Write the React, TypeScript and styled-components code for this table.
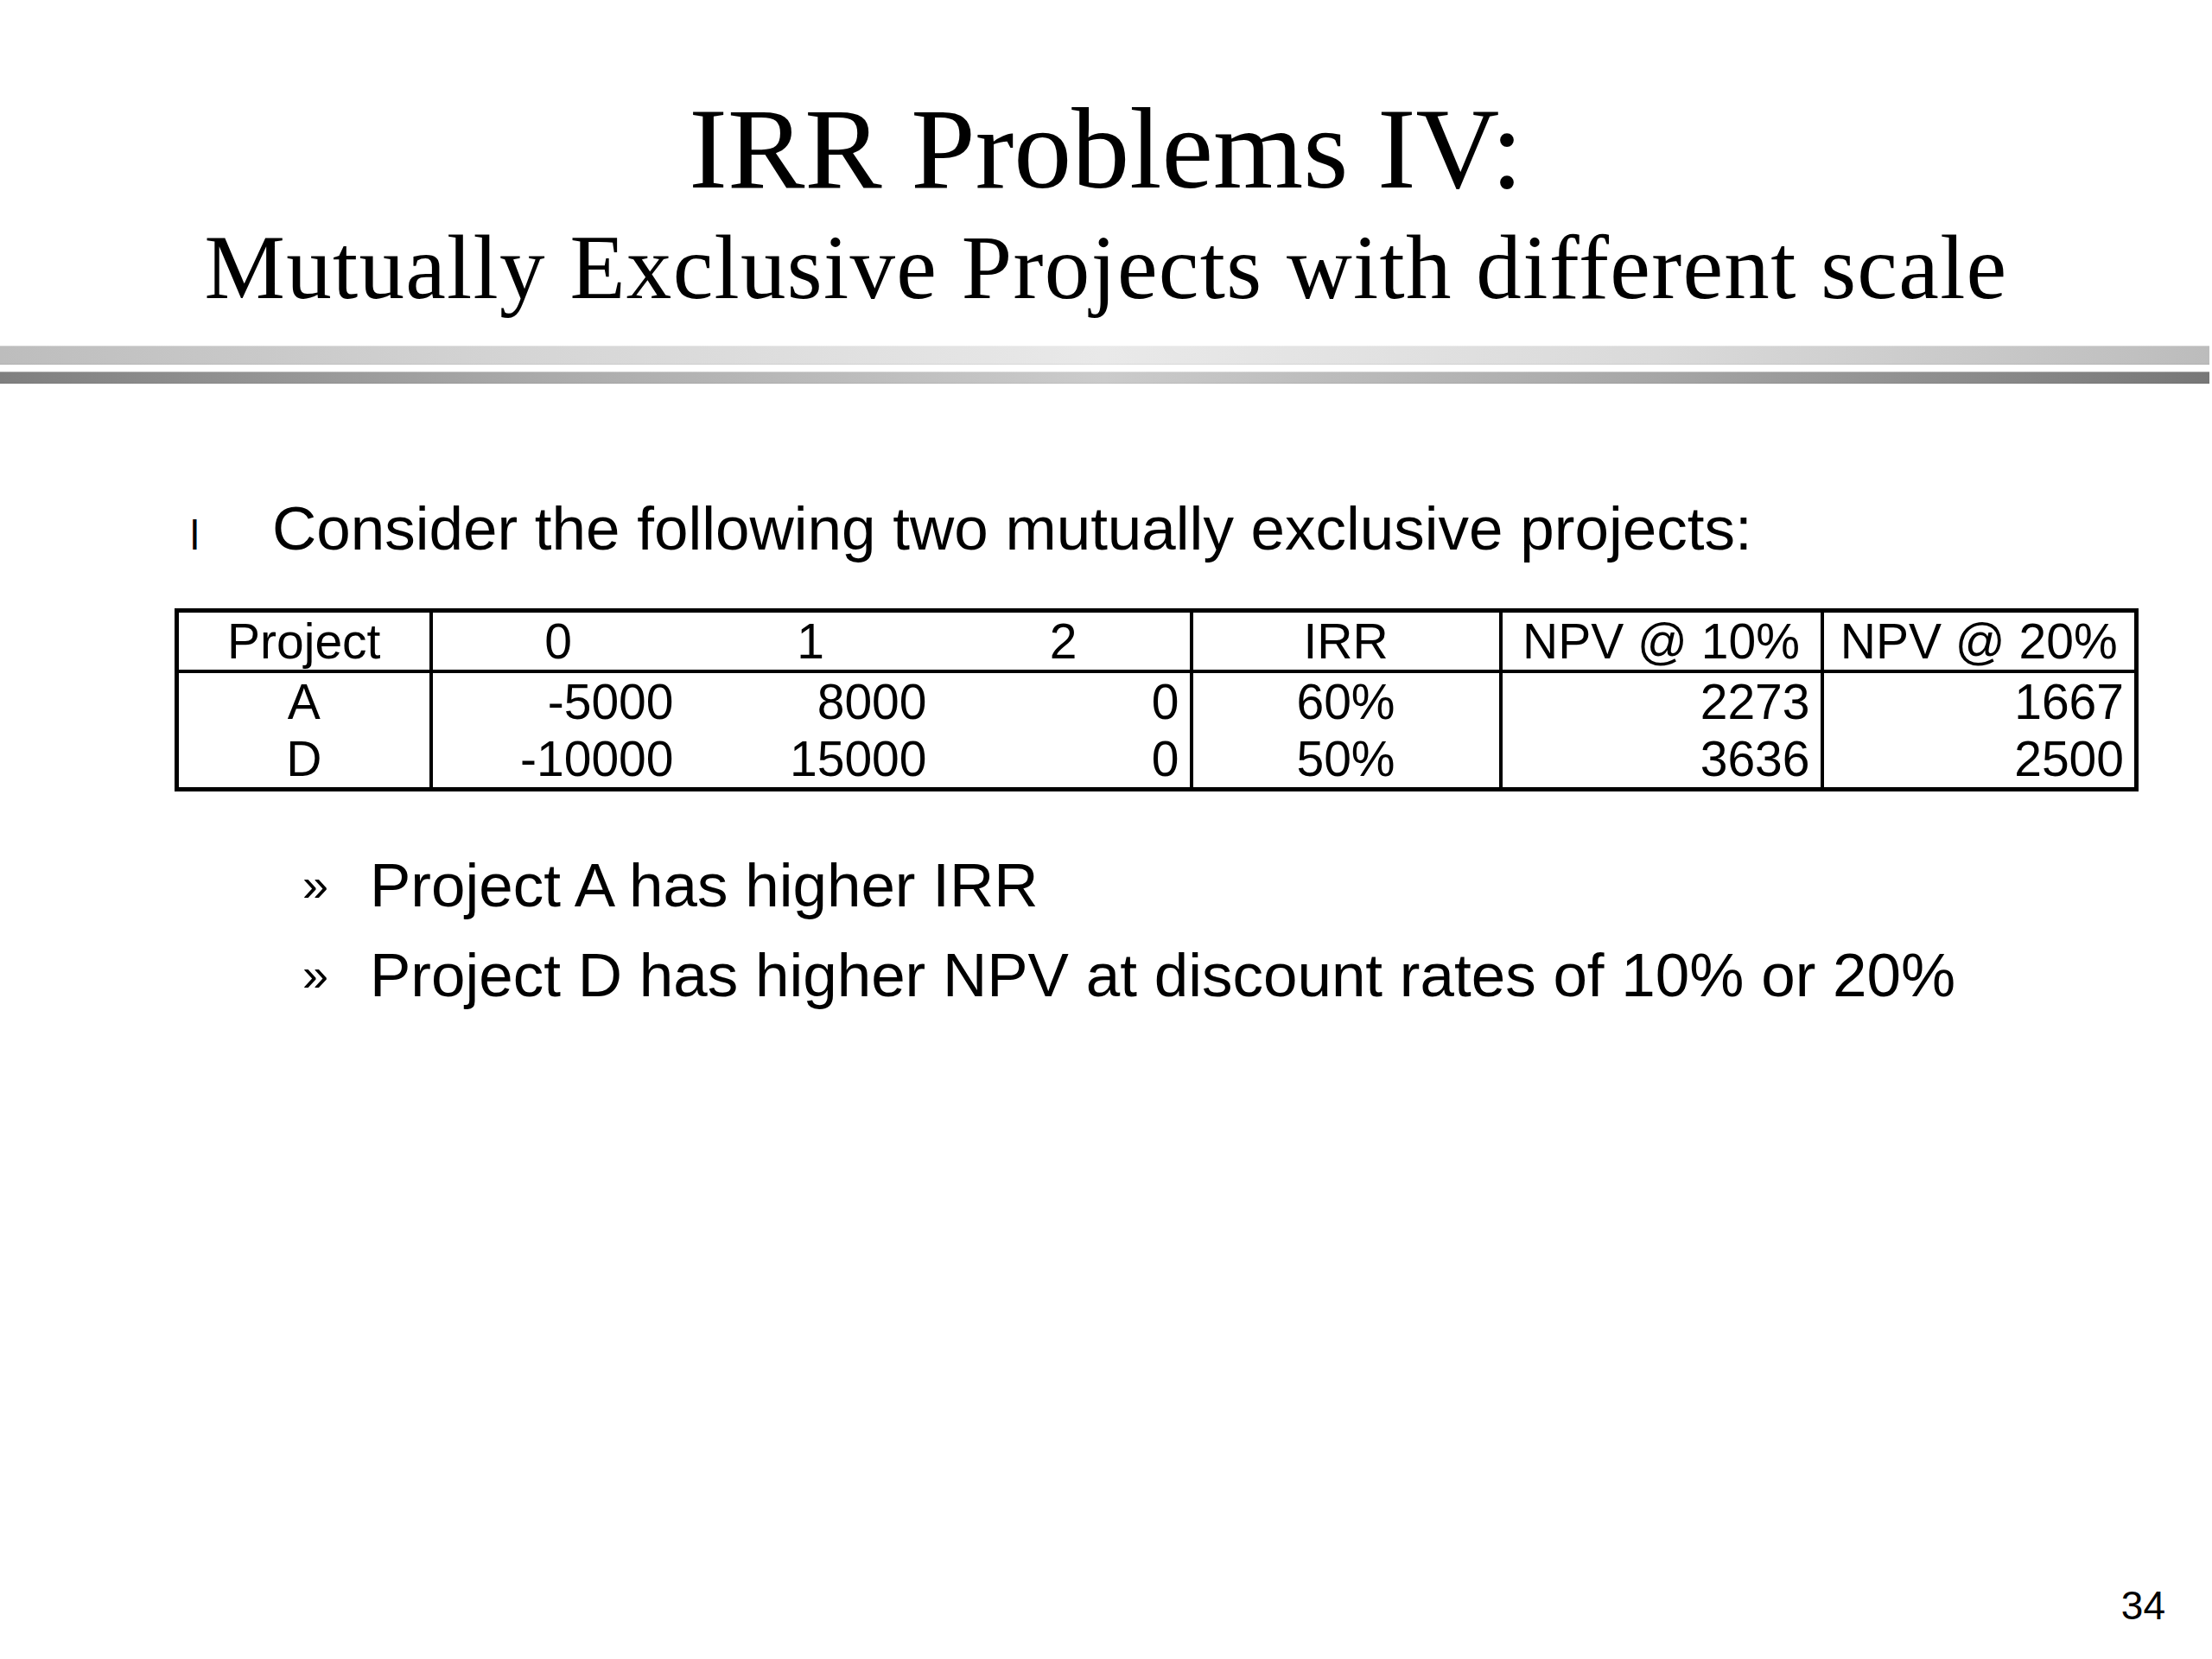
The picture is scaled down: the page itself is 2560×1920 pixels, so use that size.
import React from "react";
import styled, { createGlobalStyle } from "styled-components";

const GlobalStyle = createGlobalStyle`
  html, body {
    margin: 0;
    padding: 0;
    background: #ffffff;
  }
  body {
    font-family: "Liberation Sans", Arial, sans-serif;
    color: #000000;
  }
`;

const Slide = styled.div`
  width: 2560px;
  height: 1920px;
  box-sizing: border-box;
  padding-top: 105px;
  padding-bottom: 39px;
  display: flex;
  flex-direction: column;
  background: #ffffff;
`;

const Title = styled.h1`
  margin: 0;
  font-family: "Liberation Serif", "Times New Roman", serif;
  font-weight: normal;
  font-size: 134px;
  line-height: 134px;
  text-align: center;
`;

const Subtitle = styled.h2`
  margin: 18px 0 0;
  font-family: "Liberation Serif", "Times New Roman", serif;
  font-weight: normal;
  font-size: 105px;
  line-height: 105px;
  letter-spacing: 1.3px;
  text-align: center;
`;

const Rule = styled.div`
  margin-top: 38px;
  margin-right: 3px;
  display: flex;
  flex-direction: column;
  gap: 8px;
`;

const Bar = styled.div<{ $h: number; $stops: string }>`
  height: ${(p) => p.$h}px;
  background: linear-gradient(to right, ${(p) => p.$stops});
  box-shadow: inset 0 1px 0 rgba(255, 255, 255, 0.35),
    inset 0 -1px 0 rgba(0, 0, 0, 0.06);
`;

const Body = styled.div`
  margin-top: 128px;
  display: flex;
  flex-direction: column;
`;

const BulletRow = styled.div`
  display: flex;
  align-items: baseline;
  padding-left: 220px;
  font-size: 71px;
  line-height: 80px;
`;

const BulletMark = styled.span`
  width: 95px;
  flex: none;
  font-size: 48px;
  line-height: 1;
`;

const TableWrap = styled.div`
  margin-top: 52px;
  padding-left: 202px;
`;

const Table = styled.table`
  border-collapse: collapse;
  table-layout: fixed;
  width: 2268px;
  border: 5px solid #000;
  font-size: 57px;
`;

const Cell = styled.td<{ $align?: string; $left?: boolean; $head?: boolean }>`
  height: 66px;
  line-height: 64px;
  padding: 0 12px;
  font-weight: normal;
  white-space: nowrap;
  text-align: ${(p) => p.$align || "center"};
  border-left: ${(p) => (p.$left ? "4px solid #000" : "none")};
  border-bottom: ${(p) => (p.$head ? "4px solid #000" : "none")};
`;

const SubList = styled.div`
  margin-top: 57px;
  display: flex;
  flex-direction: column;
`;

const SubRow = styled.div`
  display: flex;
  align-items: baseline;
  padding-left: 350px;
  font-size: 71px;
  line-height: 104px;
`;

const SubMark = styled.span`
  width: 78px;
  flex: none;
  font-size: 54px;
  line-height: 1;
  transform: translateY(-6px);
`;

const Footer = styled.div`
  margin-top: auto;
  display: flex;
  justify-content: flex-end;
  padding-right: 54px;
  font-size: 46px;
  line-height: 46px;
`;

type Row = {
  project: string;
  c0: string;
  c1: string;
  c2: string;
  irr: string;
  npv10: string;
  npv20: string;
};

const rows: Row[] = [
  { project: "A", c0: "-5000", c1: "8000", c2: "0", irr: "60%", npv10: "2273", npv20: "1667" },
  { project: "D", c0: "-10000", c1: "15000", c2: "0", irr: "50%", npv10: "3636", npv20: "2500" },
];

export default function App() {
  return (
    <>
      <GlobalStyle />
      <Slide>
        <Title>IRR Problems IV:</Title>
        <Subtitle>Mutually Exclusive Projects with different scale</Subtitle>
        <Rule>
          <Bar $h={22} $stops="#bdbdbd 0%, #d6d6d6 25%, #e9e9e9 50%, #dadada 75%, #bcbcbc 100%" />
          <Bar $h={14} $stops="#7f7f7f 0%, #ababab 25%, #cbcbcb 50%, #a6a6a6 75%, #777777 100%" />
        </Rule>
        <Body>
          <BulletRow>
            <BulletMark>l</BulletMark>
            <span>Consider the following two mutually exclusive projects:</span>
          </BulletRow>
          <TableWrap>
            <Table>
              <colgroup>
                <col style={{ width: 294 }} />
                <col style={{ width: 293 }} />
                <col style={{ width: 293 }} />
                <col style={{ width: 294 }} />
                <col style={{ width: 358 }} />
                <col style={{ width: 372 }} />
                <col style={{ width: 364 }} />
              </colgroup>
              <thead>
                <tr>
                  <Cell as="th" $head>Project</Cell>
                  <Cell as="th" $head $left>0</Cell>
                  <Cell as="th" $head>1</Cell>
                  <Cell as="th" $head>2</Cell>
                  <Cell as="th" $head $left>IRR</Cell>
                  <Cell as="th" $head $left>NPV @ 10%</Cell>
                  <Cell as="th" $head $left>NPV @ 20%</Cell>
                </tr>
              </thead>
              <tbody>
                {rows.map((r) => (
                  <tr key={r.project}>
                    <Cell>{r.project}</Cell>
                    <Cell $left $align="right">{r.c0}</Cell>
                    <Cell $align="right">{r.c1}</Cell>
                    <Cell $align="right">{r.c2}</Cell>
                    <Cell $left>{r.irr}</Cell>
                    <Cell $left $align="right">{r.npv10}</Cell>
                    <Cell $left $align="right">{r.npv20}</Cell>
                  </tr>
                ))}
              </tbody>
            </Table>
          </TableWrap>
          <SubList>
            <SubRow>
              <SubMark>»</SubMark>
              <span>Project A has higher IRR</span>
            </SubRow>
            <SubRow>
              <SubMark>»</SubMark>
              <span>Project D has higher NPV at discount rates of 10% or 20%</span>
            </SubRow>
          </SubList>
        </Body>
        <Footer>34</Footer>
      </Slide>
    </>
  );
}
